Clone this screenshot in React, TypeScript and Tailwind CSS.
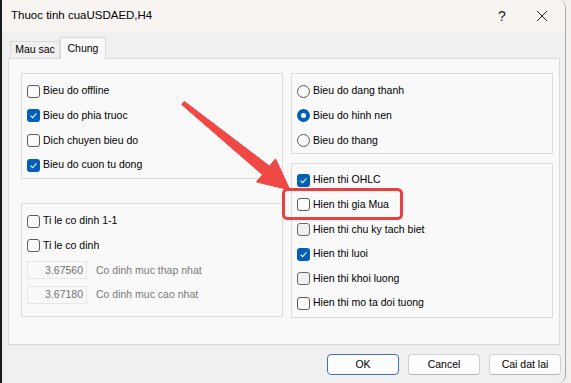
import React from 'react';

type Row = { label: string; checked?: boolean; muted?: boolean };

const generalRows: Row[] = [
  { label: 'Bieu do offline' },
  { label: 'Bieu do phia truoc', checked: true },
  { label: 'Dich chuyen bieu do' },
  { label: 'Bieu do cuon tu dong', checked: true },
];

const chartTypes = [
  { label: 'Bieu do dang thanh', on: false },
  { label: 'Bieu do hinh nen', on: true },
  { label: 'Bieu do thang', on: false },
];

const showRows: Row[] = [
  { label: 'Hien thi OHLC', checked: true },
  { label: 'Hien thi gia Mua' },
  { label: 'Hien thi chu ky tach biet', muted: true },
  { label: 'Hien thi luoi', checked: true },
  { label: 'Hien thi khoi luong', muted: true },
  { label: 'Hien thi mo ta doi tuong' },
];

const CheckBox = ({ checked, muted }: { checked?: boolean; muted?: boolean }) =>
  checked ? (
    <span className="w-[13px] h-[13px] shrink-0 rounded-[3px] bg-[#005fb8] flex items-center justify-center">
      <svg width="9" height="9" viewBox="0 0 9 9">
        <path d="M1.6 4.7 L3.6 6.6 L7.5 2.4" stroke="white" strokeWidth="1.1" fill="none" />
      </svg>
    </span>
  ) : (
    <span
      className={
        muted
          ? 'w-[13px] h-[13px] shrink-0 rounded-[3px] border border-[#6a6a6a] bg-[#f0f0f0]'
          : 'w-[13px] h-[13px] shrink-0 rounded-[3px] border border-[#5c5c5c] bg-[#fbfbfb]'
      }
    />
  );

const Radio = ({ on }: { on: boolean }) =>
  on ? (
    <span className="w-[13px] h-[13px] shrink-0 rounded-full bg-[#005fb8] flex items-center justify-center">
      <span className="w-[5px] h-[5px] rounded-full bg-white" />
    </span>
  ) : (
    <span className="w-[13px] h-[13px] shrink-0 rounded-full border border-[#5c5c5c] bg-[#fbfbfb]" />
  );

const CheckRow = ({ row }: { row: Row }) => (
  <div className="h-[24.6px] flex items-center gap-[3px]">
    <CheckBox checked={row.checked} muted={row.muted} />
    <span>{row.label}</span>
  </div>
);

const LimitRow = ({ value, label }: { value: string; label: string }) => (
  <div className="h-[24.6px] flex items-center gap-[9px]">
    <span className="w-[60px] h-[18px] border border-[#e6e6e6] bg-[#f9f9f9] flex items-center justify-end pr-[3px] text-[#6f6f6f]">
      {value}
    </span>
    <span className="text-[#7a7a7a]">{label}</span>
  </div>
);

const Button = ({ label, primary }: { label: string; primary?: boolean }) => (
  <div
    className={
      primary
        ? 'w-[72px] h-[21px] rounded-[4px] border border-[#3d72b8] bg-[#fdfdfd] flex items-center justify-center'
        : 'w-[72px] h-[21px] rounded-[4px] border border-[#d0d0d0] border-b-[#b5b5b5] bg-[#fdfdfd] flex items-center justify-center'
    }
  >
    {label}
  </div>
);

export default function App() {
  return (
    <div className="relative w-[571px] h-[383px] overflow-hidden bg-[#f3efed] border-l-[2px] border-[#1b1b1b] font-['Liberation_Sans',Arial,sans-serif] text-[10.5px] text-black">
      <div className="w-[564px] h-[383px] flex flex-col rounded-tr-[8px] rounded-b-[8px] overflow-hidden border-r border-[#a8a8a8] bg-[#f0f0f0]">
        {/* Title bar */}
        <div className="h-[32px] shrink-0 bg-[#f8f4f2] flex items-center pl-[9px]">
          <span className="text-[11.5px] flex-1">Thuoc tinh cuaUSDAED,H4</span>
          <span className="w-[20px] text-center text-[14px] font-light text-[#222] mr-[24px]">?</span>
          <svg width="12" height="12" viewBox="0 0 12 12" className="mr-[17px]">
            <path d="M1 1 L11 11 M11 1 L1 11" stroke="#222" strokeWidth="1" />
          </svg>
        </div>

        {/* Body */}
        <div className="flex-1 pt-[5px] pl-[6px] pr-[3px]">
          {/* Tabs */}
          <div className="h-[21px] flex items-end pl-[2px]">
            <div className="w-[50px] h-[17px] border border-b-0 border-[#d9d9d9] bg-[#f0f0f0] flex items-center justify-center">
              Mau sac
            </div>
            <div className="w-[46px] h-[22px] -mb-px relative z-10 border border-b-0 border-[#d9d9d9] bg-[#f9f9f9] flex items-center justify-center">
              Chung
            </div>
          </div>

          {/* Panel */}
          <div className="w-[552px] h-[287px] border border-[#dadada] bg-[#f9f9f9] pt-[14px] pl-[12px] flex gap-[8px]">
            <div className="w-[262px] flex flex-col gap-[24px]">
              <div className="h-[106px] border border-[#dcdcdc] pt-[5px] pl-[5px]">
                {generalRows.map((r) => (
                  <CheckRow key={r.label} row={r} />
                ))}
              </div>
              <div className="h-[114px] border border-[#dcdcdc] pt-[5px] pl-[5px]">
                <CheckRow row={{ label: 'Ti le co dinh 1-1' }} />
                <CheckRow row={{ label: 'Ti le co dinh' }} />
                <LimitRow value="3.67560" label="Co dinh muc thap nhat" />
                <LimitRow value="3.67180" label="Co dinh muc cao nhat" />
              </div>
            </div>
            <div className="w-[262px] flex flex-col gap-[9px]">
              <div className="h-[81px] border border-[#dcdcdc] pt-[5px] pl-[5px]">
                {chartTypes.map((c) => (
                  <div key={c.label} className="h-[24.6px] flex items-center gap-[3px]">
                    <Radio on={c.on} />
                    <span>{c.label}</span>
                  </div>
                ))}
              </div>
              <div className="h-[155px] border border-[#dcdcdc] pt-[4px] pl-[5px]">
                {showRows.map((r) => (
                  <CheckRow key={r.label} row={r} />
                ))}
              </div>
            </div>
          </div>

          {/* Buttons */}
          <div className="mt-[9px] flex justify-end gap-[9px] pr-[1px]">
            <Button label="OK" primary />
            <Button label="Cancel" />
            <Button label="Cai dat lai" />
          </div>
        </div>
      </div>

      {/* Annotation overlay */}
      <svg
        className="absolute left-[-2px] top-0 pointer-events-none"
        width="571"
        height="383"
        viewBox="0 0 571 383"
      >
        <polygon
          points="184.3,101.4 269.5,166.1 275.5,158.8 290,190 256.5,182 262.5,174.7 181.7,104.6"
          fill="#f04844"
          strokeLinejoin="round"
          stroke="#f04844"
          strokeWidth="1"
        />
        <rect x="283.5" y="189.5" width="118" height="29" rx="4" fill="none" stroke="#e9413f" strokeWidth="3" />
      </svg>
    </div>
  );
}
